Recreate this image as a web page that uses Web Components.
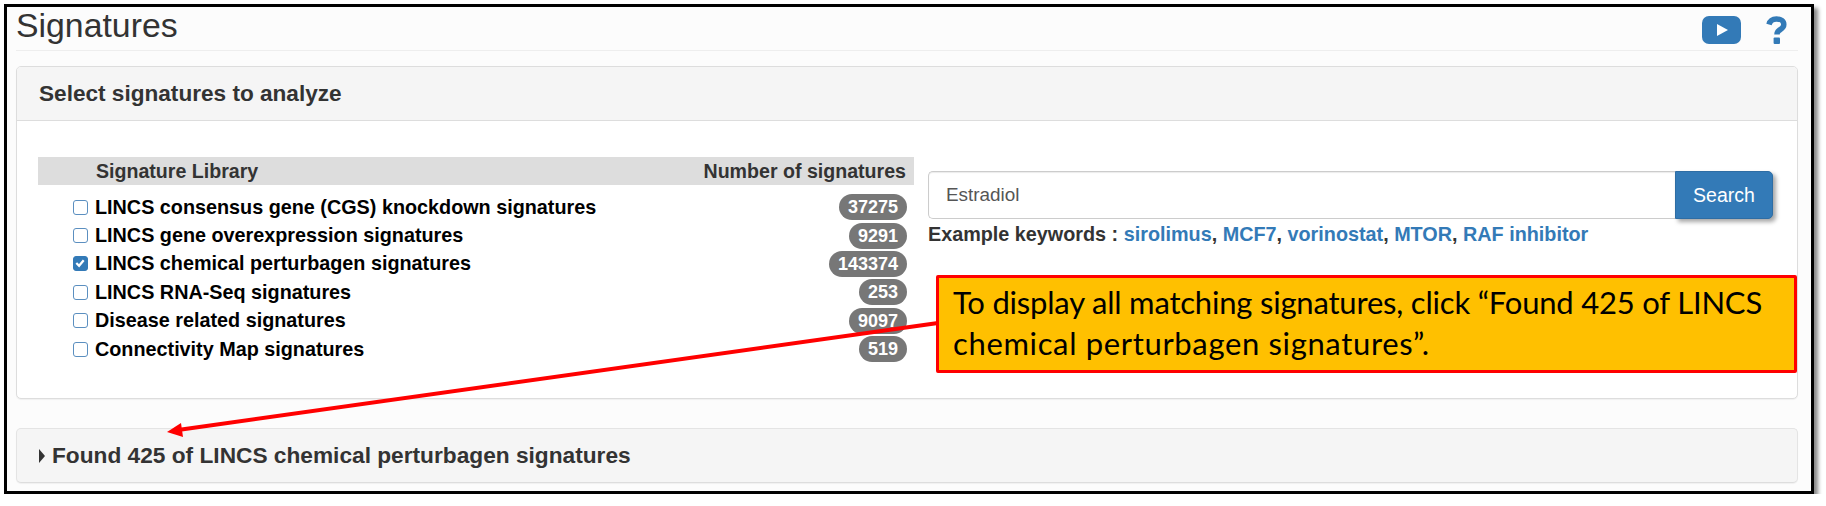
<!DOCTYPE html>
<html>
<head>
<meta charset="utf-8">
<title>Signatures</title>
<style>
  html, body { margin: 0; padding: 0; background: #fff; }
  body { font-family: "Liberation Sans", Arial, sans-serif; color: #333; }
</style>
</head>
<body>
<sig-frame>
  <page-title slot="top">Signatures</page-title>
  <select-panel slot="main">
    <sig-table slot="table">
      <sig-row count="37275">LINCS consensus gene (CGS) knockdown signatures</sig-row>
      <sig-row count="9291">LINCS gene overexpression signatures</sig-row>
      <sig-row count="143374" checked>LINCS chemical perturbagen signatures</sig-row>
      <sig-row count="253">LINCS RNA-Seq signatures</sig-row>
      <sig-row count="9097">Disease related signatures</sig-row>
      <sig-row count="519">Connectivity Map signatures</sig-row>
    </sig-table>
    <search-box slot="search"></search-box>
  </select-panel>
  <found-panel slot="main">Found 425 of LINCS chemical perturbagen signatures</found-panel>
  <call-out slot="over"><span class="a">To display all matching signatures, click “Found 425 of LINCS</span> <span class="b">chemical perturbagen signatures”.</span></call-out>
</sig-frame>

<script>
function shadow(el, html) {
    el.attachShadow({ mode: "open" }).innerHTML = html;
}

class SigFrame extends HTMLElement {
    constructor() {
        super();
        shadow(this, `
            <style>
                :host {
                    display: block;
                    position: relative;
                    box-sizing: border-box;
                    width: 1810px;
                    height: 490px;
                    margin: 4px 0 0 4px;
                    padding: 0 13px 0 9px;
                    background: #fcfcfc;
                    border: 3px solid #000;
                    box-shadow: 4px 4px 4px #888;
                }
                svg {
                    position: absolute;
                    left: 0; top: 0;
                    pointer-events: none;
                }
            </style>
            <slot name="top"></slot>
            <slot name="main"></slot>
            <svg width="1803" height="482" viewBox="7 7 1803 482">
                <line x1="938" y1="323" x2="178" y2="430" stroke="#f00" stroke-width="4"/>
                <polygon points="167,432 181,423 183,437" fill="#f00"/>
            </svg>
            <slot name="over"></slot>
        `);
    }
}

class PageTitle extends HTMLElement {
    constructor() {
        super();
        shadow(this, `
            <style>
                :host {
                    display: flex;
                    justify-content: space-between;
                    box-sizing: border-box;
                    height: 44px;
                    margin-bottom: 15px;
                    border-bottom: 1px solid #eee;
                }
                .t { font-size: 33.8px; line-height: 36px; color: #333; }
                .icons { display: flex; gap: 25px; padding: 9px 11px 0 0; align-items: flex-start; }
                svg { display: block; }
            </style>
            <div class="t"><slot></slot></div>
            <div class="icons">
                <svg width="39" height="28" viewBox="0 0 39 28">
                    <rect width="39" height="28" rx="7" fill="#337ab7"/>
                    <polygon points="15,8 26,14 15,20" fill="#fff"/>
                </svg>
                <svg width="21" height="28" viewBox="0 0 21 28">
                    <path d="M3 8.5 C4 4.5 7 3 10.5 3 C15 3 17.8 5.2 17.8 8.5 C17.8 12 15 13 13 14.5 C11.5 15.6 11 16.5 11 18.5" fill="none" stroke="#337ab7" stroke-width="5.5"/>
                    <rect x="7.6" y="21.5" width="6.4" height="6.5" rx="1" fill="#337ab7"/>
                </svg>
            </div>
        `);
    }
}

class SelectPanel extends HTMLElement {
    constructor() {
        super();
        shadow(this, `
            <style>
                :host {
                    display: block;
                    box-sizing: border-box;
                    height: 333px;
                    margin-bottom: 29px;
                    background: #fff;
                    border: 1px solid #ddd;
                    border-radius: 5px;
                    box-shadow: 0 1px 1px rgba(0,0,0,.05);
                }
                .head {
                    box-sizing: border-box;
                    height: 54px;
                    padding: 0 22px;
                    background: #f5f5f5;
                    border-bottom: 1px solid #ddd;
                    border-radius: 4px 4px 0 0;
                    font-size: 22.6px;
                    font-weight: bold;
                    line-height: 53px;
                }
                .body {
                    display: grid;
                    grid-template-columns: 876px 845px;
                    column-gap: 14px;
                    padding: 36px 0 0 21px;
                }
            </style>
            <div class="head">Select signatures to analyze</div>
            <div class="body">
                <slot name="table"></slot>
                <slot name="search"></slot>
            </div>
        `);
    }
}

class SigTable extends HTMLElement {
    constructor() {
        super();
        shadow(this, `
            <style>
                :host { display: block; }
                .head {
                    display: flex;
                    justify-content: space-between;
                    height: 28px;
                    padding: 0 8px 0 58px;
                    margin-bottom: 8px;
                    background: #ddd;
                    font-size: 19.6px;
                    font-weight: bold;
                    line-height: 29px;
                }
            </style>
            <div class="head"><span>Signature Library</span><span>Number of signatures</span></div>
            <slot></slot>
        `);
    }
}

class SigRow extends HTMLElement {
    constructor() {
        super();
        const check = this.hasAttribute("checked");
        shadow(this, `
            <style>
                :host {
                    display: flex;
                    align-items: center;
                    justify-content: space-between;
                    height: 28.4px;
                    padding: 0 7px 0 35px;
                    color: #000;
                    font-size: 19.8px;
                    font-weight: bold;
                }
                .l { display: flex; align-items: center; gap: 7px; }
                .box {
                    box-sizing: border-box;
                    width: 15px;
                    height: 15px;
                    border: 1.5px solid #5b8fc0;
                    border-radius: 3px;
                    background: #fff;
                }
                .box.on { background: #337ab7; border-color: #337ab7; }
                .box svg { display: block; }
                .badge {
                    min-width: 10px;
                    padding: 0 9px;
                    height: 26px;
                    line-height: 26px;
                    border-radius: 13px;
                    background: #777;
                    color: #fff;
                    font-size: 18px;
                }
            </style>
            <span class="l">
                <span class="box ${check ? "on" : ""}">${check ? `<svg width="12" height="12" viewBox="0 0 13 13"><path d="M2.5 6.5 L5.5 9.5 L10.5 3.5" fill="none" stroke="#fff" stroke-width="2.4"/></svg>` : ""}</span>
                <span><slot></slot></span>
            </span>
            <span class="badge">${this.getAttribute("count")}</span>
        `);
    }
}

class SearchBox extends HTMLElement {
    constructor() {
        super();
        shadow(this, `
            <style>
                :host { display: block; padding-top: 14px; }
                .group { display: flex; width: 845px; height: 48px; }
                .input {
                    box-sizing: border-box;
                    flex: 1;
                    padding: 0 17px;
                    background: #fff;
                    border: 1px solid #ccc;
                    border-right: 0;
                    border-radius: 5px 0 0 5px;
                    box-shadow: inset 0 1px 1px rgba(0,0,0,.08);
                    color: #555;
                    font-size: 18.9px;
                    line-height: 46px;
                }
                .btn {
                    width: 98px;
                    background: #337ab7;
                    border: 1px solid #2e6da4;
                    border-radius: 0 5px 5px 0;
                    box-sizing: border-box;
                    box-shadow: 3px 3px 4px rgba(0,0,0,.35);
                    color: #fff;
                    font-size: 19.5px;
                    line-height: 46px;
                    text-align: center;
                }
                .ex { margin-top: 3px; color: #333; font-size: 19.8px; font-weight: bold; line-height: 24px; }
                a { color: #337ab7; text-decoration: none; }
            </style>
            <div class="group"><div class="input">Estradiol</div><div class="btn">Search</div></div>
            <div class="ex">Example keywords : <a>sirolimus</a>, <a>MCF7</a>, <a>vorinostat</a>, <a>MTOR</a>, <a>RAF inhibitor</a></div>
        `);
    }
}

class FoundPanel extends HTMLElement {
    constructor() {
        super();
        shadow(this, `
            <style>
                :host {
                    display: flex;
                    align-items: center;
                    gap: 7px;
                    box-sizing: border-box;
                    height: 55px;
                    padding: 0 0 0 22px;
                    background: #f5f5f5;
                    border: 1px solid #e4e4e4;
                    border-bottom-color: #ddd;
                    border-radius: 5px;
                    box-shadow: 0 1px 1px rgba(0,0,0,.05);
                    font-size: 22.7px;
                    font-weight: bold;
                }
                i {
                    width: 0; height: 0;
                    border-left: 6px solid #333;
                    border-top: 7px solid transparent;
                    border-bottom: 7px solid transparent;
                }
            </style>
            <i></i><span><slot></slot></span>
        `);
    }
}

class CallOut extends HTMLElement {
    constructor() {
        super();
        shadow(this, `
            <style>
                :host {
                    position: absolute;
                    left: 929px;
                    top: 268px;
                    box-sizing: border-box;
                    width: 861px;
                    height: 98px;
                    padding: 4px 14px;
                    background: #ffc000;
                    border: 3.5px solid #f00;
                    border-radius: 2px;
                    color: #000;
                    font-family: Lato, "Liberation Sans", sans-serif;
                    font-size: 31px;
                    line-height: 41px;
                }
                ::slotted(.a) { display: block; white-space: nowrap; letter-spacing: -.2px; }
                ::slotted(.b) { display: block; white-space: nowrap; letter-spacing: .65px; }
            </style>
            <slot></slot>
        `);
    }
}

customElements.define("sig-frame", SigFrame);
customElements.define("page-title", PageTitle);
customElements.define("select-panel", SelectPanel);
customElements.define("sig-table", SigTable);
customElements.define("sig-row", SigRow);
customElements.define("search-box", SearchBox);
customElements.define("found-panel", FoundPanel);
customElements.define("call-out", CallOut);
</script>
</body>
</html>
